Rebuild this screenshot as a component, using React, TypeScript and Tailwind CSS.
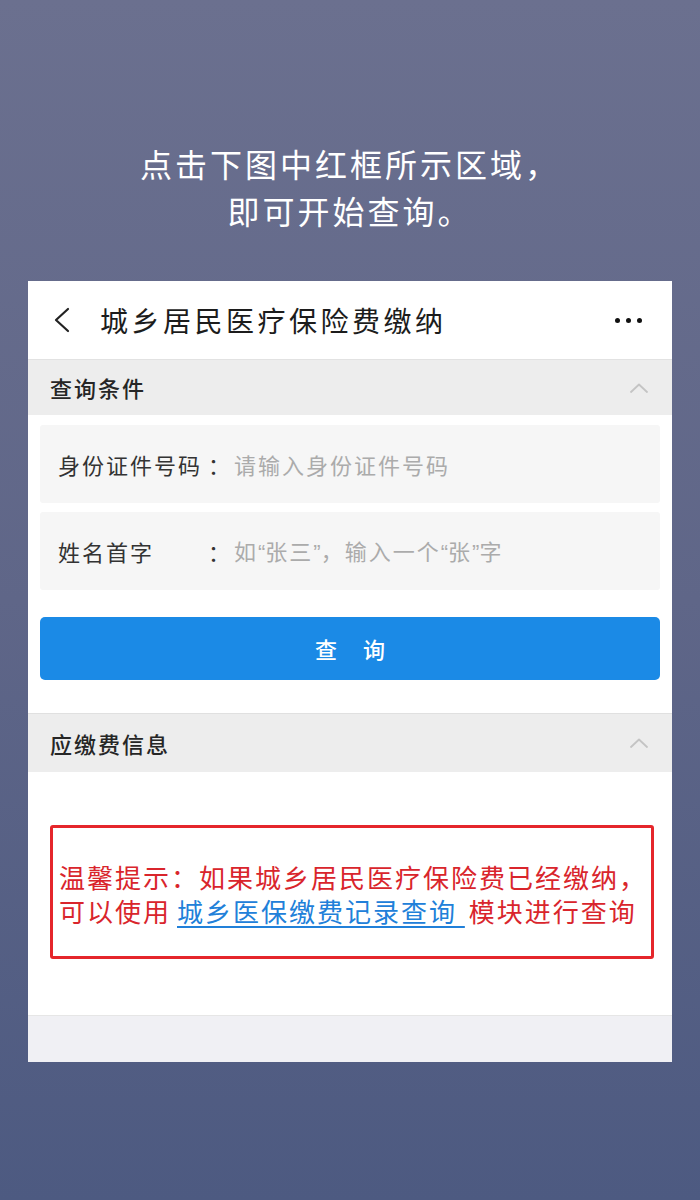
import React from "react";

const cjk = { fontFamily: '"Noto Sans CJK SC", "Noto Sans", sans-serif' };

function ChevronUp() {
  return (
    <svg width="18" height="10" viewBox="0 0 18 10" fill="none">
      <path d="M1 9 L9 1.5 L17 9" stroke="#c4c4c4" strokeWidth="1.8" strokeLinecap="round" strokeLinejoin="round" />
    </svg>
  );
}

function SectionHeader({ title, className }: { title: string; className?: string }) {
  return (
    <div className={"flex items-center justify-between bg-[#ededed] pl-[22px] pr-[24px] " + (className ?? "")}>
      <span className="text-[22px] tracking-[2px] font-medium text-[#262626]">{title}</span>
      <ChevronUp />
    </div>
  );
}

function Field({ label, children }: { label: string; children: React.ReactNode }) {
  return (
    <div className="flex h-[78px] items-center rounded-[3px] bg-[#f6f6f6] pl-[18px]">
      <span className="w-[150px] text-[22px] tracking-[2px] text-[#333]">{label}</span>
      <span className="w-[26px] text-[22px] text-[#333]">：</span>
      <span className="text-[22px] tracking-[2px] text-[#ababab]">{children}</span>
    </div>
  );
}

// narrow curly quotes set in a Latin face
const Q = ({ c }: { c: string }) => (
  <span className="tracking-[0px]" style={{ fontFamily: '"Liberation Sans", sans-serif' }}>
    {c}
  </span>
);

export default function App() {
  return (
    <div
      style={cjk}
      className="min-h-[1200px] w-full bg-gradient-to-b from-[#6b708f] via-[#5f6688] to-[#4d5a81] pt-[140px] pb-[138px]"
    >
      <div className="text-center text-[32px] leading-[47px] tracking-[3px] text-white">
        <div>点击下图中红框所示区域，</div>
        <div>即可开始查询。</div>
      </div>

      <div className="mx-[28px] mt-[47px] bg-white">
        {/* top navigation bar */}
        <div className="flex h-[79px] items-center border-b border-[#e2e2e2] pl-[24px] pr-[30px]">
          <svg width="20" height="26" viewBox="0 0 20 26" fill="none">
            <path d="M16 2 L4 13 L16 24" stroke="#222" strokeWidth="2.2" strokeLinecap="round" strokeLinejoin="round" />
          </svg>
          <span className="ml-[28px] text-[28px] tracking-[3.5px] text-[#1c1c1c]">城乡居民医疗保险费缴纳</span>
          <div className="ml-auto flex items-center gap-[6px]">
            <span className="h-[5px] w-[5px] rounded-full bg-[#111]" />
            <span className="h-[5px] w-[5px] rounded-full bg-[#111]" />
            <span className="h-[5px] w-[5px] rounded-full bg-[#111]" />
          </div>
        </div>

        <SectionHeader title="查询条件" className="h-[55px]" />

        <div className="px-[12px] pt-[10px] pb-[33px]">
          <div className="flex flex-col gap-[9px]">
            <Field label="身份证件号码">请输入身份证件号码</Field>
            <Field label="姓名首字">
              如<Q c="“" />张三<Q c="”" />，输入一个<Q c="“" />张<Q c="”" />字
            </Field>
          </div>
          <button className="mt-[27px] flex h-[63px] w-full items-center justify-center gap-[26px] rounded-[5px] bg-[#1b8ae6] text-[22px] font-medium text-white">
            <span>查</span>
            <span>询</span>
          </button>
        </div>

        <SectionHeader title="应缴费信息" className="h-[59px] border-t border-[#e0e0e0]" />

        <div className="pt-[53px] pb-[56px] pl-[22px] pr-[18px]">
          <div className="h-[134px] rounded-[3px] border-[3px] border-[#e5262b] pl-[6px] pt-[32px] text-[26px] leading-[34px] tracking-[2px] text-[#d9252c] whitespace-nowrap">
            <div>温馨提示：如果城乡居民医疗保险费已经缴纳，</div>
            <div className="flex items-baseline">
              <span>可以使用</span>
              <span className="ml-[6px] text-[#2180d9] underline decoration-[2px] underline-offset-[4px]">
                城乡医保缴费记录查询&nbsp;
              </span>
              <span className="ml-[4px]">模块进行查询</span>
            </div>
          </div>
        </div>

        <div className="h-[47px] border-t border-[#e6e6e6] bg-[#f0f0f4]" />
      </div>
    </div>
  );
}
